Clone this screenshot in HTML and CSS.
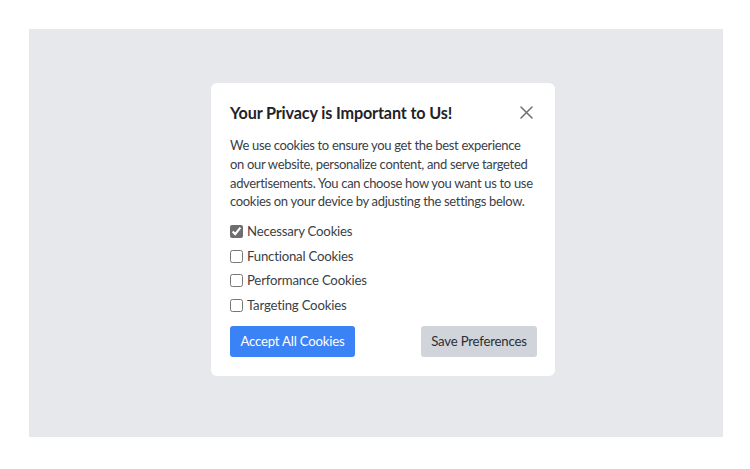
FILE: index.html
```html
<!DOCTYPE html>
<html lang="en">
<head>
<meta charset="utf-8">
<title>Cookie consent</title>
<link rel="stylesheet" href="styles.css">
</head>
<body>
<div class="page">
  <div class="backdrop">
    <div class="modal">
      <div class="modal-head">
        <h2 class="title">Your Privacy is Important to Us!</h2>
        <button class="close" aria-label="Close">
          <svg width="13" height="13" viewBox="0 0 13 13"><path d="M1 1 L12 12 M12 1 L1 12" stroke="#6b6f78" stroke-width="1.5" stroke-linecap="round" fill="none"/></svg>
        </button>
      </div>
      <p class="text">We use cookies to ensure you get the best experience on our website, personalize content, and serve targeted advertisements. You can choose how you want us to use cookies on your device by adjusting the settings below.</p>
      <ul class="options">
        <li><label><input type="checkbox" class="chk" checked> Necessary Cookies</label></li>
        <li><label><input type="checkbox" class="chk"> Functional Cookies</label></li>
        <li><label><input type="checkbox" class="chk"> Performance Cookies</label></li>
        <li><label><input type="checkbox" class="chk"> Targeting Cookies</label></li>
      </ul>
      <div class="actions">
        <button class="btn btn-primary">Accept All Cookies</button>
        <button class="btn btn-secondary">Save Preferences</button>
      </div>
    </div>
  </div>
</div>
</body>
</html>
```
FILE: styles.css
```css
html, body {
  margin: 0;
  padding: 0;
  background: #ffffff;
}
body {
  font-family: "Lato", "Noto Sans", "Liberation Sans", sans-serif;
  color: #374151;
}
.page {
  padding: 29px 27px 32px 29px;
}
.backdrop {
  background: #e7e8ec;
  height: 408px;
  box-sizing: border-box;
  padding: 54px 0 0 182px;
}
.modal {
  width: 344px;
  box-sizing: border-box;
  background: #ffffff;
  border-radius: 6px;
  padding: 17px 18px 19px 19px;
}
.modal-head {
  display: flex;
  justify-content: space-between;
  align-items: center;
  height: 25px;
}
.title {
  margin: 0;
  font-size: 16.2px;
  font-weight: 700;
  letter-spacing: -0.15px;
  color: #1f2329;
  line-height: 25px;
  white-space: nowrap;
}
.close {
  border: 0;
  background: none;
  padding: 0;
  margin: 0 4px 1px 0;
  width: 13px;
  height: 13px;
  display: flex;
}
.text {
  margin: 11px 0 0 0;
  font-size: 13px;
  letter-spacing: -0.32px;
  line-height: 18.75px;
  color: #3a3f47;
}
.options {
  list-style: none;
  margin: 11px 0 0 0;
  padding: 0;
  display: flex;
  flex-direction: column;
  gap: 5.5px;
}
.options li {
  height: 19px;
  font-size: 13.2px;
  letter-spacing: -0.2px;
  line-height: 19px;
  color: #3a3f47;
}
.options label {
  display: flex;
  align-items: center;
  gap: 2px;
}
.chk {
  margin: 0 2px 0 0;
  width: 13px;
  height: 13px;
  accent-color: #6e6e6e;
}
.actions {
  display: flex;
  justify-content: space-between;
  margin-top: 11px;
}
.btn {
  font-family: inherit;
  font-size: 13.2px;
  letter-spacing: -0.2px;
  height: 31px;
  border: 0;
  border-radius: 3px;
  padding: 0;
  white-space: nowrap;
}
.btn-primary {
  background: #3b82f6;
  color: #ffffff;
  width: 125px;
}
.btn-secondary {
  background: #d1d5db;
  color: #2a2e35;
  width: 116px;
}
```
